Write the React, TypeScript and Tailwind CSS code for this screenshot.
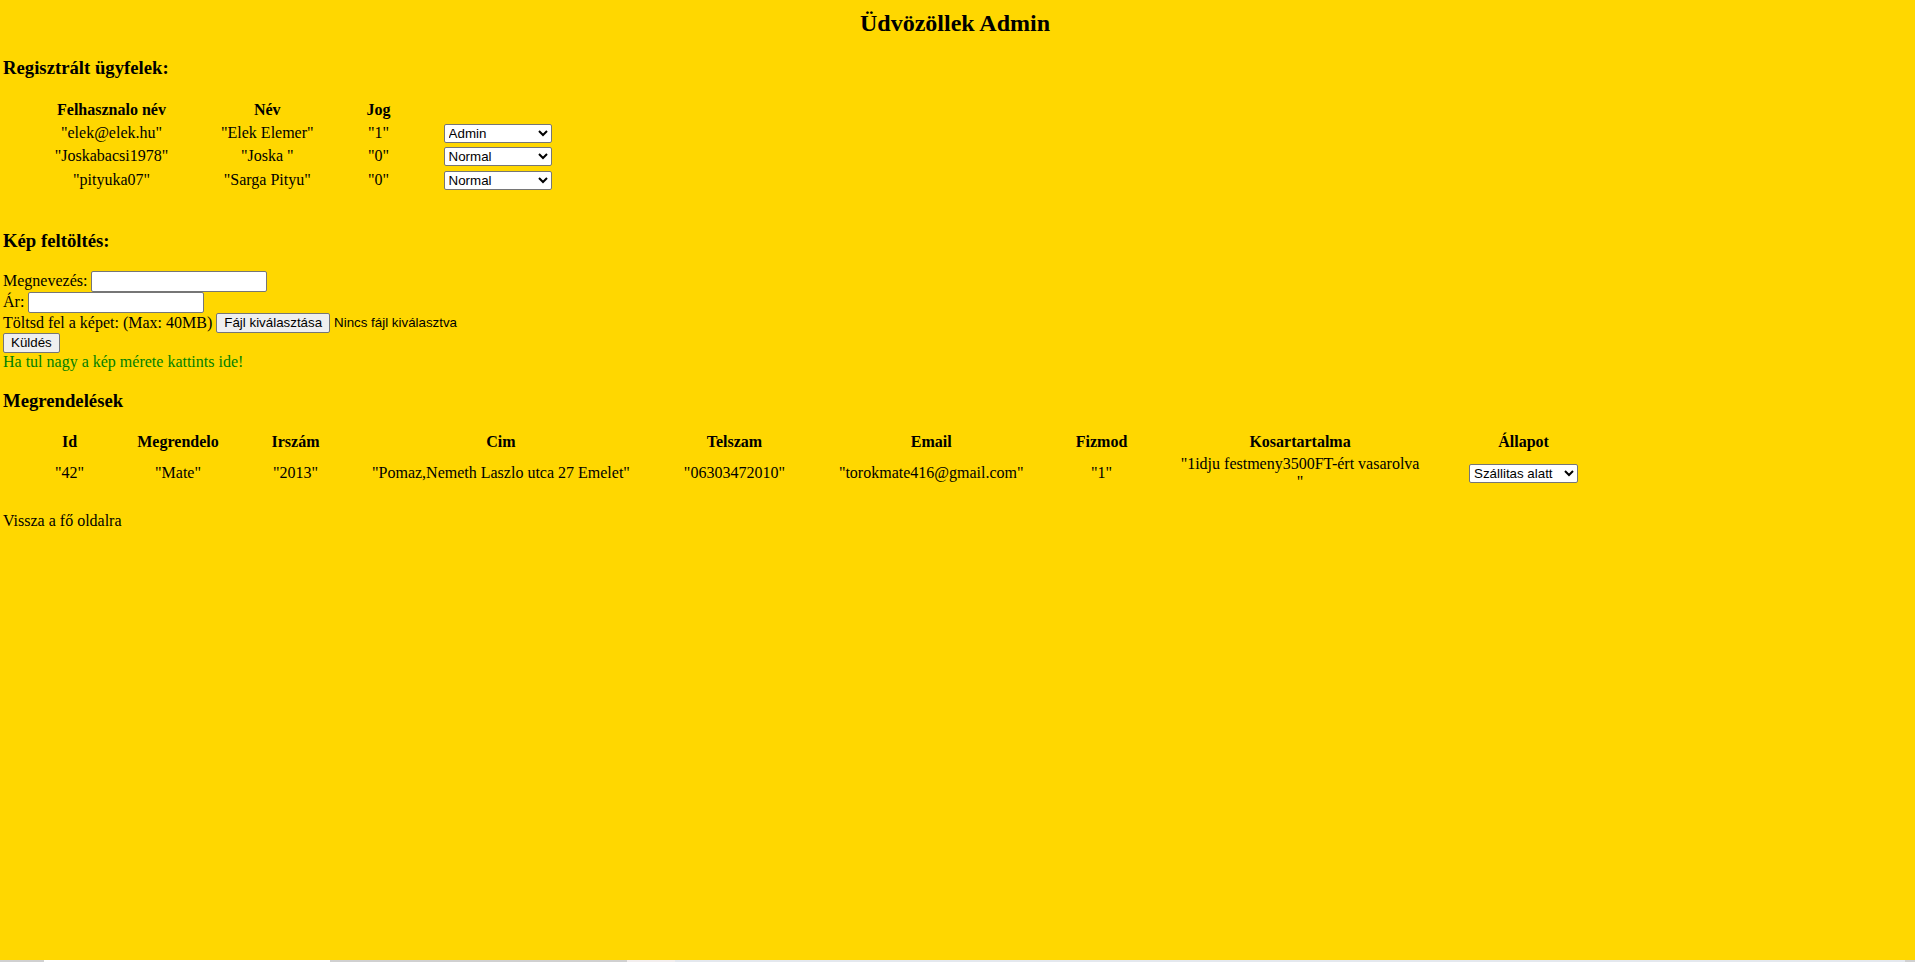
const users = [
  { login: "elek@elek.hu", name: "Elek Elemer", jog: "1", role: "Admin" },
  { login: "Joskabacsi1978", name: "Joska ", jog: "0", role: "Normal" },
  { login: "pityuka07", name: "Sarga Pityu", jog: "0", role: "Normal" },
];

const orderHeads = [
  { label: "Id", w: "w-[129px]" },
  { label: "Megrendelo", w: "w-[84px]" },
  { label: "Irszám", w: "w-[147px]" },
  { label: "Cim", w: "w-[257px]" },
  { label: "Telszam", w: "w-[203px]" },
  { label: "Email", w: "w-[184px]" },
  { label: "Fizmod", w: "w-[150px]" },
  { label: "Kosartartalma", w: "w-[243px]" },
  { label: "Állapot", w: "w-[200px]" },
];

const cell = "p-px text-center align-middle whitespace-nowrap";
const ctrl =
  "font-['Liberation_Sans',Arial,sans-serif] text-[13.33px] leading-[normal] text-black";

function RoleSelect({ value }: { value: string }) {
  return (
    <select
      defaultValue={value}
      className={`${ctrl} h-[19px] w-[108px] rounded-[2px] border border-[#767676] bg-white align-middle`}
    >
      <option>Admin</option>
      <option>Normal</option>
    </select>
  );
}

export default function App() {
  return (
    <div className="flex min-h-screen flex-col bg-[#ffd700] font-['Liberation_Serif','Times_New_Roman',serif] text-[16px] leading-[normal] text-black">
      <div className="flex flex-1 flex-col px-[3px] pt-[10px]">
        <h2 className="pr-[5px] text-center text-[24px] font-bold">Üdvözöllek Admin</h2>

        <h3 className="mt-[20px] text-[18.72px] font-bold">Regisztrált ügyfelek:</h3>
        <table className="mt-[18.7px] w-max border-separate border-spacing-[2px]">
          <thead>
            <tr>
              <th className={`${cell} w-[213px] font-bold`}>Felhasznalo név</th>
              <th className={`${cell} w-[94px] font-bold`}>Név</th>
              <th className={`${cell} w-[124px] font-bold`}>Jog</th>
              <th className={`${cell} w-[110px]`}></th>
            </tr>
          </thead>
          <tbody>
            {users.map((u) => (
              <tr key={u.login}>
                <td className={cell}>"{u.login}"</td>
                <td className={cell}>"{u.name}"</td>
                <td className={cell}>"{u.jog}"</td>
                <td className={`${cell} h-[21px]`}>
                  <RoleSelect value={u.role} />
                </td>
              </tr>
            ))}
          </tbody>
        </table>

        <h3 className="mt-[37px] text-[18.72px] font-bold">Kép feltöltés:</h3>
        <form className="mt-[18.7px]" onSubmit={(e) => e.preventDefault()}>
          <div>
            Megnevezés:{" "}
            <input
              type="text"
              className={`${ctrl} h-[21px] w-[176px] rounded-[2px] border border-[#767676] bg-white px-[2px] py-px`}
            />
          </div>
          <div>
            Ár:{" "}
            <input
              type="text"
              className={`${ctrl} h-[21px] w-[176px] rounded-[2px] border border-[#767676] bg-white px-[2px] py-px`}
            />
          </div>
          <div>
            Töltsd fel a képet: (Max: 40MB){" "}
            <button
              type="button"
              className={`${ctrl} h-[20px] rounded-[2px] border border-[#767676] bg-[#efefef] px-[7px]`}
            >
              Fájl kiválasztása
            </button>
            <span className={`${ctrl} ml-[4px]`}>Nincs fájl kiválasztva</span>
          </div>
          <div>
            <button
              type="submit"
              className={`${ctrl} h-[20px] rounded-[2px] border border-[#767676] bg-[#efefef] px-[7px]`}
            >
              Küldés
            </button>
          </div>
        </form>
        <a className="w-max text-[#008000]">Ha tul nagy a kép mérete kattints ide!</a>

        <h3 className="mt-[18.72px] text-[18.72px] font-bold">Megrendelések</h3>
        <table className="mt-[18.7px] w-max border-separate border-spacing-[2px]">
          <thead>
            <tr>
              {orderHeads.map((h) => (
                <th key={h.label} className={`${cell} ${h.w} font-bold`}>
                  {h.label}
                </th>
              ))}
            </tr>
          </thead>
          <tbody>
            <tr>
              <td className={cell}>"42"</td>
              <td className={cell}>"Mate"</td>
              <td className={cell}>"2013"</td>
              <td className={cell}>"Pomaz,Nemeth Laszlo utca 27 Emelet"</td>
              <td className={cell}>"06303472010"</td>
              <td className={cell}>"torokmate416@gmail.com"</td>
              <td className={cell}>"1"</td>
              <td className={cell}>
                "1idju festmeny3500FT-ért vasarolva
                <br />"
              </td>
              <td className={cell}>
                <select
                  defaultValue="Szállitas alatt"
                  className={`${ctrl} h-[19px] w-[109px] rounded-[2px] border border-[#767676] bg-white align-middle`}
                >
                  <option>Feldolgozás alatt</option>
                  <option>Szállitas alatt</option>
                  <option>Kiszállítva</option>
                </select>
              </td>
            </tr>
          </tbody>
        </table>

        <p className="mt-[18px]">
          <a className="text-black">Vissza a fő oldalra</a>
        </p>
      </div>

      <div className="flex h-[2px] bg-[#d0d0d0]">
        <div className="w-[44px]" />
        <div className="w-[286px] bg-white" />
        <div className="w-[297px]" />
        <div className="w-[48px] bg-[#f3eeee]" />
        <div className="flex-1 bg-[#e4e8ee]" />
        <div className="w-[10px]" />
      </div>
    </div>
  );
}
